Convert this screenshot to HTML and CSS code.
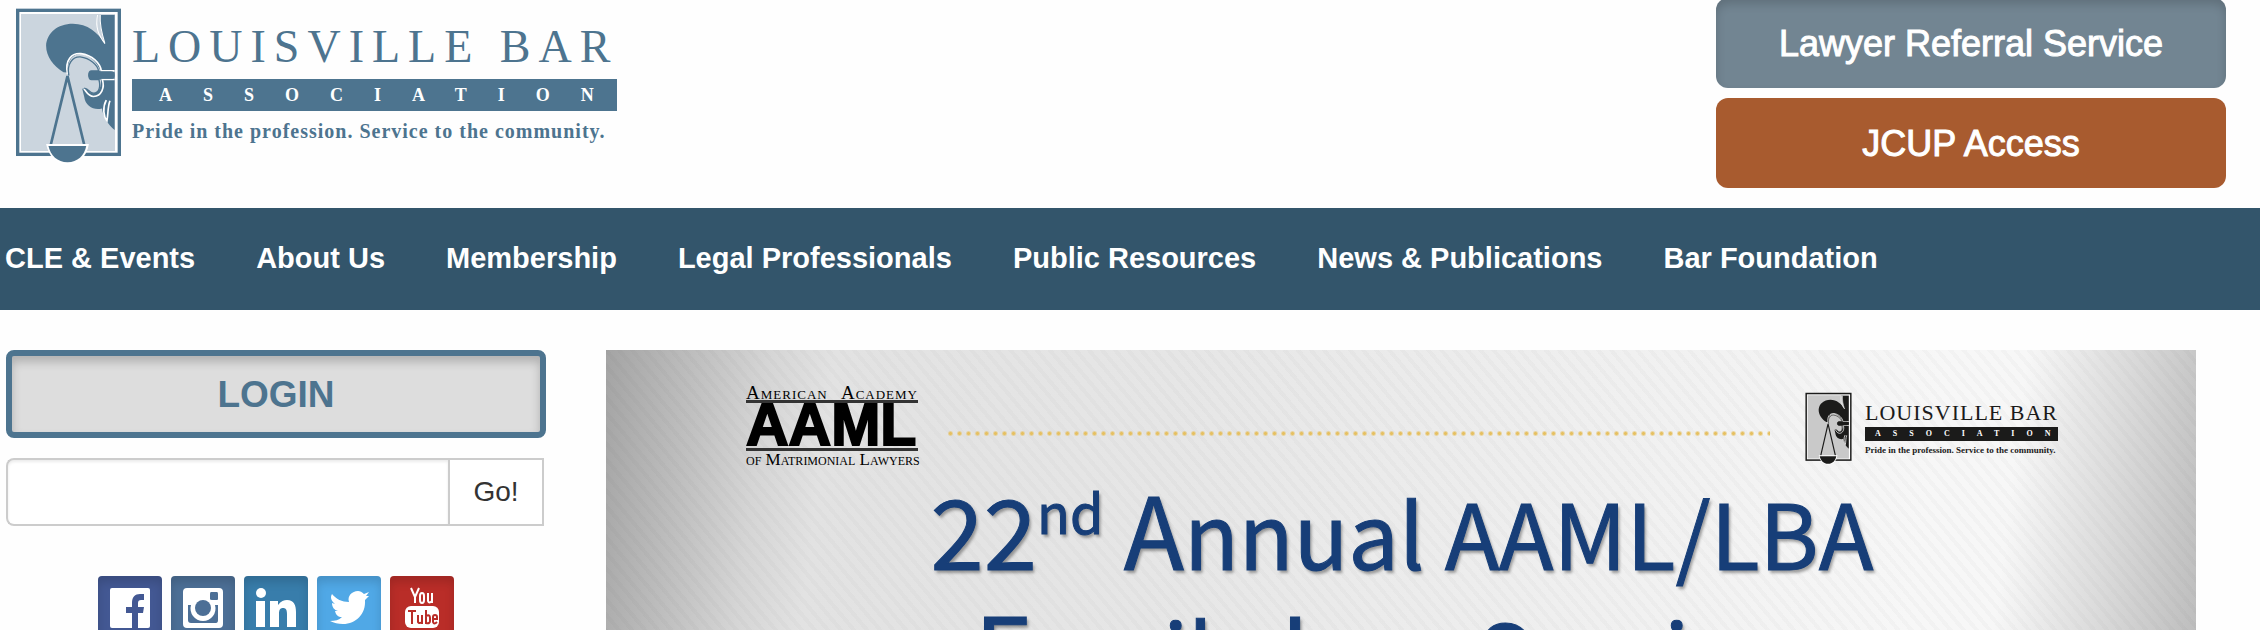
FILE: index.html
```html
<!DOCTYPE html>
<html lang="en">
<head>
<meta charset="utf-8">
<title>Louisville Bar Association</title>
<link rel="stylesheet" href="styles.css">
</head>
<body>
<svg class="defs" aria-hidden="true">
  <symbol id="emblem" viewBox="15 20 320 475" preserveAspectRatio="none">
    <rect x="23" y="30" width="304" height="433" fill="#fff" stroke="var(--ink)" stroke-width="10"/>
    <rect x="33" y="41" width="281" height="412" fill="var(--pane)"/>
    <path d="M262 44H313V390C294 374 279 352 275 325C252 332 225 318 222 290L216 266L235 264C241 282 262 284 268 266C272 256 273 247 272 238H244C233 238 233 212 244 212H270C262 188 240 164 212 161C190 160 172 176 171 217L160 216C130 198 108 170 108 136C110 98 142 70 188 70C232 70 262 96 284 130C272 104 258 76 262 44Z" fill="var(--ink)"/>
    <path d="M262 44C254 82 266 106 284 130C274 98 268 72 270 44" fill="var(--pane)" stroke="#fff" stroke-width="3"/>
    <path d="M172 222C163 178 185 158 212 160C246 164 270 190 273 212H313M313 238H276C284 262 274 288 250 289C232 288 228 272 221 266M288 300C276 322 280 350 290 362C294 340 292 320 299 302" fill="none" stroke="#fff" stroke-width="5"/>
    <path d="M176 226C169 190 188 169 210 170C240 174 262 195 265 212H244C233 212 233 238 244 238H266C272 262 266 278 250 279C236 278 238 266 222 264" fill="var(--pane)" stroke="var(--ink)" stroke-width="4"/>
    <rect x="235" y="213" width="78" height="23" rx="11" fill="var(--ink)"/>
    <path d="M122 434L172 228L222 434" fill="var(--pane)" stroke="var(--ink)" stroke-width="8"/>
    <path d="M108 432H236C230 470 205 494 172 494S116 470 108 432Z" fill="#fff"/>
    <path d="M115 438H228C223 466 202 487 172 487S121 466 115 438Z" fill="var(--ink)"/>
  </symbol>
</svg>

<header class="top">
  <a class="brand" href="#">
    <svg class="brand-mark" role="img" aria-label="Lady Justice emblem"><use href="#emblem"/></svg>
    <span class="brand-text">
      <span class="brand-name">LOUISVILLE BAR</span>
      <span class="brand-bar">ASSOCIATION</span>
      <span class="brand-line">Pride in the profession. Service to the community.</span>
    </span>
  </a>
  <div class="actions">
    <a class="action action-slate" href="#">Lawyer Referral Service</a>
    <a class="action action-rust" href="#">JCUP Access</a>
  </div>
</header>

<nav class="menu" aria-label="Main">
  <a href="#">CLE &amp; Events</a>
  <a href="#">About Us</a>
  <a href="#">Membership</a>
  <a href="#">Legal Professionals</a>
  <a href="#">Public Resources</a>
  <a href="#">News &amp; Publications</a>
  <a href="#">Bar Foundation</a>
</nav>

<div class="content">
  <aside class="side">
    <button class="login" type="button">LOGIN</button>
    <form class="search">
      <input type="text" aria-label="Search">
      <button type="button">Go!</button>
    </form>
    <div class="social">
      <a class="fb" href="#" aria-label="Facebook"><svg viewBox="0 0 64 64"><rect x="12" y="12" width="40" height="40" rx="2" fill="#fff"/><path d="M34 53V37H28V31H34V27C34 21 37 18 42 18H46V24H43C41 24 40 25 40 27V31H46L45 37H40V53Z" fill="#435893"/></svg></a>
      <a class="ig" href="#" aria-label="Instagram"><svg viewBox="0 0 64 64"><path fill-rule="evenodd" d="M16 12H48Q52 12 52 16V48Q52 52 48 52H16Q12 52 12 48V16Q12 12 16 12ZM17 29V44Q17 47 20 47H45Q47 47 47 44V29H44A12.500 12.500 0 1 1 20 29ZM40 16Q39 16 39 18V23Q39 24 41 24H46Q47 24 47 23V18Q47 16 46 16Z" fill="#fff"/><circle cx="32" cy="32" r="8" fill="#4c6f96"/></svg></a>
      <a class="li" href="#" aria-label="LinkedIn"><svg viewBox="0 0 64 64"><circle cx="17" cy="17" r="5" fill="#fff"/><path d="M12 25H21V51H12ZM26 25H34V29C37 25 40 24 43 24C50 24 52 29 52 36V51H43V38C43 34 42 32 39 32C36 32 35 34 35 38V51H26Z" fill="#fff"/></svg></a>
      <a class="tw" href="#" aria-label="Twitter"><svg viewBox="0 0 64 64"><path d="M15 18C19 23 25 26 32 26C30 20 35 15 41 15C43 15 45 16 47 18L52 16L49 20L52 20L48 24C49 38 39 48 26 48C21 48 17 47 13 45C18 45 22 44 25 41C21 41 19 39 18 35H21C17 34 15 31 15 27L18 28C14 25 13 21 15 18Z" fill="#fff"/></svg></a>
      <a class="yt" href="#" aria-label="YouTube"><svg viewBox="0 0 64 64"><path d="M21 12L25 21V27M29 12L25 21M30 20V24Q30 27 32 27T34 24V20Q34 17 32 17T30 20ZM38 17V25Q39 28 42 25V17M42 17V27" fill="none" stroke="#fff" stroke-width="2"/><rect x="15" y="30" width="34" height="22" rx="6" fill="#fff"/><path d="M18 35H26M22 35V48M28 39V46Q29 48 32 46V39M32 39V48M36 34V48M36 40Q40 38 40 42V45Q40 48 36 47M43 43H47V41Q47 39 45 39T43 41V46Q44 49 47 46" fill="none" stroke="#b92d28" stroke-width="2"/></svg></a>
    </div>
  </aside>

  <main class="banner">
    <div class="banner-top">
      <div class="aaml">
        <span class="aaml-over"><span>American</span><span>Academy</span></span>
        <span class="aaml-big">AAML</span>
        <span class="aaml-under">of Matrimonial Lawyers</span>
      </div>
      <div class="dots"></div>
      <div class="brand brand-small">
        <svg class="brand-mark" aria-hidden="true"><use href="#emblem"/></svg>
        <span class="brand-text">
          <span class="brand-name">LOUISVILLE BAR</span>
          <span class="brand-bar">ASSOCIATION</span>
          <span class="brand-line">Pride in the profession. Service to the community.</span>
        </span>
      </div>
    </div>
    <h1><span class="number">22<sup>nd</sup></span> <span class="big">A</span>nnual AAML/LBA<br><span class="big">F</span>amily <span class="big">L</span>aw Seminar</h1>
  </main>
</div>
</body>
</html>
```

FILE: styles.css
```css
* { box-sizing: border-box; }
body {
  margin: 0;
  height: 100vh;
  overflow: hidden;
  background: #fefefe;
  font-family: "Liberation Sans", Arial, sans-serif;
}
a { color: inherit; text-decoration: none; }
.defs { display: none; }

/* header */
.top {
  display: flex;
  justify-content: space-between;
  align-items: flex-start;
  padding: 0 34px 20px 15px;
}
.brand {
  --ink: #4d748f;
  --pane: #cbd5de;
  display: flex;
  gap: 10px;
  padding-top: 7px;
  color: var(--ink);
  font-family: "Liberation Serif", "Times New Roman", serif;
}
.brand-mark { width: 107px; height: 158px; }
.brand-text { display: flex; flex-direction: column; width: 485px; padding-top: 16px; }
.brand-name { font-size: 46px; line-height: 48px; letter-spacing: 8px; white-space: nowrap; }
.brand-bar {
  margin-top: 8px;
  padding-left: 27px;
  background: var(--ink);
  color: #fff;
  font-size: 18px;
  font-weight: bold;
  line-height: 32px;
  letter-spacing: 31px;
  white-space: nowrap;
}
.brand-line { margin-top: 8px; font-size: 20px; font-weight: bold; line-height: 24px; letter-spacing: 1px; white-space: nowrap; }

.actions { display: flex; flex-direction: column; gap: 10px; width: 510px; margin-top: -2px; }
.action {
  padding-top: 2px;
  border-radius: 12px;
  color: #fff;
  font-size: 36px;
  line-height: 88px;
  text-align: center;
  -webkit-text-stroke: 1px #fff;
}
.action-slate { background: #728592; box-shadow: inset 0 6px 10px rgba(0, 0, 0, .16); }
.action-rust { background: #a85b2f; }

/* navigation */
.menu {
  display: flex;
  gap: 61px;
  padding: 0 0 2px 5px;
  background: #33556b;
  color: #fff;
  font-size: 29px;
  font-weight: bold;
  line-height: 100px;
  white-space: nowrap;
}

/* content */
.content {
  display: grid;
  grid-template-columns: 18fr 53fr;
  gap: 60px;
  padding: 40px 64px 0 6px;
}
.side { display: flex; flex-direction: column; }
.login {
  height: 88px;
  padding: 2px 0 0;
  border: 6px solid #4d748f;
  border-radius: 8px;
  background: #ddd;
  box-shadow: inset 0 6px 10px rgba(0, 0, 0, .2);
  color: #4d748f;
  font: bold 37px "Liberation Sans", Arial, sans-serif;
}
.search { display: flex; height: 68px; margin: 20px 2px 0 0; }
.search input {
  flex: 1;
  min-width: 0;
  padding: 0 20px;
  border: 2px solid #ccc;
  border-right: 0;
  border-radius: 8px 0 0 8px;
  background: #fff;
  box-shadow: inset 0 2px 3px rgba(0, 0, 0, .08);
  font-size: 28px;
}
.search button {
  width: 96px;
  padding: 0;
  border: 2px solid #ccc;
  background: #fff;
  color: #333;
  font: 28px "Liberation Sans", Arial, sans-serif;
}
.social { display: flex; justify-content: center; gap: 9px; margin-top: 50px; }
.social a { height: 64px; border-radius: 4px; box-shadow: inset 0 6px 10px rgba(0, 0, 0, .14); }
.social svg { display: block; width: 64px; height: 64px; }
.fb { background: #435893; }
.ig { background: #4c6f96; }
.li { background: #387dab; }
.tw { background: #50a8e6; }
.yt { background: #b92d28; }

/* banner */
.banner {
  padding: 36px 138px 0 140px;
  background:
    repeating-linear-gradient(50deg, rgba(0, 0, 0, .02) 0 4px, transparent 4px 10px),
    linear-gradient(97deg, #a4a4a4 0, #bcbcbc 5%, #d5d5d5 10%, #e2e2e2 14%, #e6e6e6 35%, #efefef 60%, #f7f7f7 82%, #f7f7f7 87%, #dcdcdc 93%, #bbb 100%);
}
.banner-top { display: flex; align-items: flex-start; }
.aaml { display: flex; flex-direction: column; width: 172px; color: #000; white-space: nowrap; }
.aaml-over, .aaml-under {
  font-family: "Liberation Serif", "Times New Roman", serif;
  font-variant: small-caps;
}
.aaml-over { display: flex; justify-content: space-between; font-size: 19px; line-height: 14px; letter-spacing: 1px; border-bottom: 3px solid #333; }
.aaml-big { font-size: 59px; font-weight: bold; line-height: 45px; border-bottom: 3px solid #333; -webkit-text-stroke: 2px #000; }
.aaml-under { font-size: 17px; line-height: 18px; }
.dots {
  flex: 1;
  height: 9px;
  margin: 43px 35px 0 28px;
  background: radial-gradient(circle, #e6c061 0 1px, transparent 3px) 0 0 / 9px 9px;
}
.brand-small { --ink: #1b1b1a; --pane: #c9c9c9; gap: 13px; padding-top: 6px; }
.brand-small .brand-mark { width: 47px; height: 73px; }
.brand-small .brand-text { width: 193px; padding-top: 9px; }
.brand-small .brand-name { font-size: 22px; line-height: 24px; letter-spacing: 1px; }
.brand-small .brand-bar { margin-top: 2px; padding-left: 10px; font-size: 8px; line-height: 14px; letter-spacing: 12px; }
.brand-small .brand-line { margin-top: 3px; font-size: 9px; line-height: 12px; letter-spacing: 0; }
h1 {
  margin: 2px 0 0;
  color: #173e78;
  font-family: "Noto Sans CJK SC", sans-serif;
  font-size: 90px;
  font-weight: 400;
  line-height: 120px;
  text-align: center;
  white-space: nowrap;
  text-shadow: 2px 3px 3px rgba(0, 0, 0, .35);
  -webkit-text-stroke: 1px #173e78;
}
h1 .big { font-size: 99px; line-height: 1; }
h1 .number { font-size: 96px; line-height: 1; }
h1 sup { font-size: 54px; line-height: 1; vertical-align: 36px; }
```
